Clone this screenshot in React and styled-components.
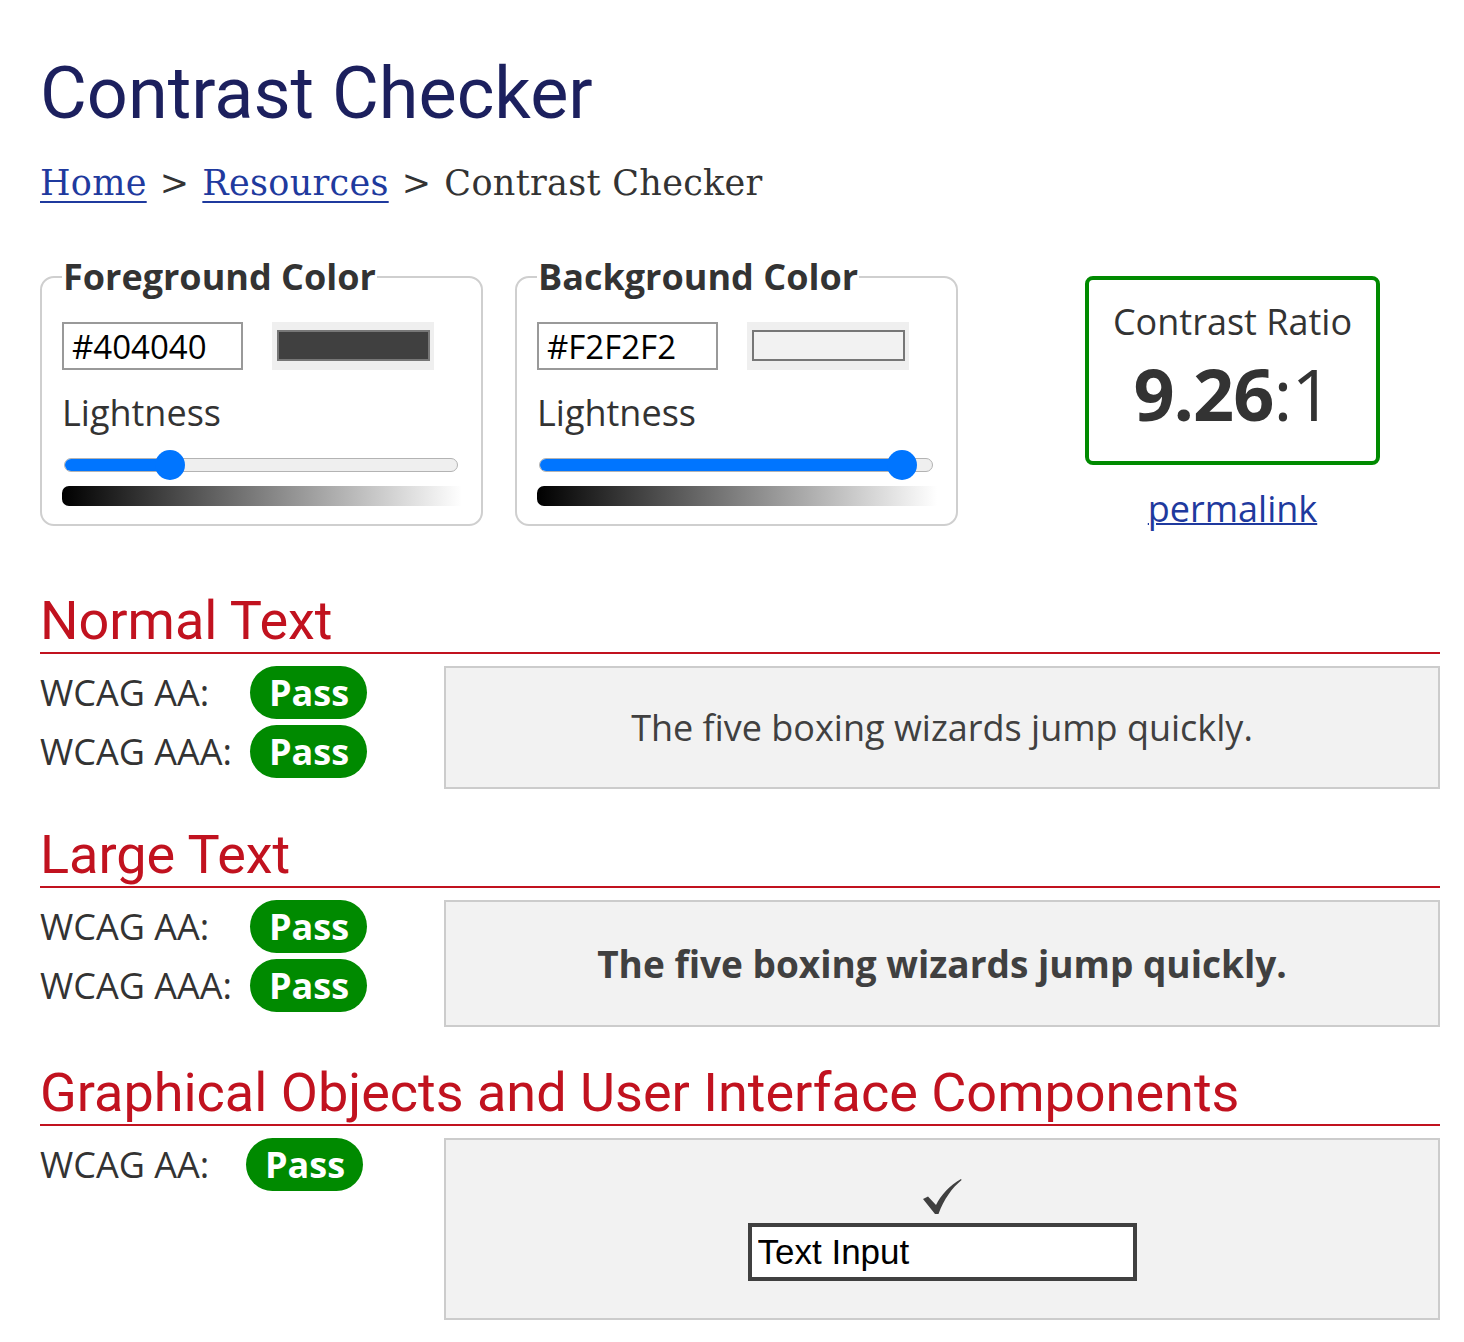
import React from "react";
import styled, { createGlobalStyle } from "styled-components";

const GlobalStyle = createGlobalStyle`
  html, body { margin: 0; padding: 0; background: #fff; }
  body { font-family: "Open Sans", "DejaVu Sans", sans-serif; color: #333; }
  * { box-sizing: border-box; }
`;

const Page = styled.main`
  width: 1464px;
  padding: 58px 24px 40px 40px;
`;

const Title = styled.h1`
  margin: 0;
  font-family: Roboto, "Open Sans", sans-serif;
  font-weight: 400;
  font-size: 72px;
  line-height: 72px;
  color: #1c205e;
`;

const Breadcrumb = styled.nav`
  margin-top: 33px;
  font-family: "DejaVu Serif", "Liberation Serif", serif;
  font-size: 35px;
  line-height: 41px;
  letter-spacing: 0.3px;
  color: #333;
  display: flex;
  gap: 13px;
`;

const Crumb = styled.a`
  color: #1f3a9e;
  text-decoration: underline;
  text-decoration-thickness: 2px;
  text-underline-offset: 6px;
`;

const TopRow = styled.div`
  margin-top: 51px;
  display: flex;
  align-items: flex-start;
`;

const ColorSet = styled.fieldset`
  margin: 0 32px 0 0;
  width: 443px;
  padding: 0 20px 18px 20px;
  border: 2px solid #cfcfcf;
  border-radius: 14px;
  min-inline-size: 0;
`;

const Legend = styled.legend`
  padding: 0 1px;
  font-size: 36px;
  line-height: 43px;
  font-weight: 700;
  color: #333;
`;

const InputRow = styled.div`
  margin-top: 24px;
  display: flex;
  align-items: center;
  gap: 29px;
`;

const HexInput = styled.input`
  width: 181px;
  height: 48px;
  border: 2px solid #999;
  padding: 0 8px;
  font-family: "Open Sans", sans-serif;
  font-size: 33px;
  color: #000;
  background: #fff;
  outline: none;
`;

const SwatchWell = styled.div`
  width: 162px;
  height: 48px;
  background: #efefef;
  padding: 8px 4px 9px 5px;
  display: flex;
`;

const Swatch = styled.div`
  flex: 1;
  border: 2px solid #777;
  background: ${(p) => p.$color};
`;

const FieldLabel = styled.div`
  margin-top: 18px;
  font-size: 36px;
  line-height: 49px;
  color: #333;
`;

const Slider = styled.div`
  position: relative;
  margin: 13px 3px 0 2px;
  height: 30px;
  display: flex;
  align-items: center;
`;

const Track = styled.div`
  position: relative;
  width: 100%;
  height: 14px;
  border: 1.5px solid #b3b3b3;
  border-radius: 7px;
  background: #efefef;
  overflow: hidden;
`;

const Fill = styled.div`
  height: 100%;
  background: #0075ff;
`;

const Thumb = styled.div`
  position: absolute;
  top: 0;
  width: 30px;
  height: 30px;
  margin-left: -15px;
  border-radius: 50%;
  background: #0075ff;
`;

const Ramp = styled.div`
  margin-top: 6px;
  height: 20px;
  width: 400px;
  border-radius: 7px 0 0 7px;
  background: linear-gradient(to right, #000 0%, #fff 100%);
`;

const RatioColumn = styled.div`
  margin-left: 95px;
  margin-top: 21px;
  width: 295px;
  display: flex;
  flex-direction: column;
  align-items: center;
`;

const RatioBox = styled.div`
  width: 100%;
  height: 189px;
  border: 4px solid #008a00;
  border-radius: 8px;
  padding-top: 17px;
  text-align: center;
  color: #333;
`;

const RatioLabel = styled.div`
  font-size: 36px;
  line-height: 49px;
`;

const RatioValue = styled.div`
  margin-top: 4px;
  font-size: 72px;
  line-height: 86px;
  letter-spacing: -1px;
  strong { font-weight: 700; }
`;

const Permalink = styled.a`
  margin-top: 19px;
  font-size: 36px;
  line-height: 49px;
  color: #1f3a9e;
  text-decoration: underline;
  text-decoration-thickness: 2px;
`;

const Section = styled.section`
  margin-top: ${(p) => p.$gap}px;
`;

const SectionTitle = styled.h2`
  margin: 0 0 12px 0;
  font-family: Roboto, "Open Sans", sans-serif;
  font-weight: 400;
  font-size: 54px;
  line-height: 62px;
  color: #c1121f;
  border-bottom: 2px solid #c1121f;
`;

const SectionBody = styled.div`
  display: flex;
  align-items: flex-start;
`;

const Results = styled.div`
  width: 404px;
  display: flex;
  flex-direction: column;
  gap: 6px;
`;

const ResultRow = styled.div`
  display: flex;
  align-items: center;
  height: 53px;
`;

const ResultLabel = styled.span`
  width: ${(p) => p.$w || 210}px;
  font-size: 36px;
  color: #333;
`;

const Badge = styled.span`
  display: inline-flex;
  align-items: center;
  height: 53px;
  padding: 0 18px 0 19px;
  border-radius: 27px;
  background: #008a00;
  color: #fff;
  font-weight: 700;
  font-size: 36px;
`;

const Sample = styled.div`
  flex: 1;
  height: ${(p) => p.$h}px;
  background: #f2f2f2;
  border: 2px solid #ccc;
  display: flex;
  flex-direction: column;
  align-items: center;
  justify-content: center;
  color: #404040;
  font-size: ${(p) => (p.$bold ? 37 : 36)}px;
  font-weight: ${(p) => (p.$bold ? 700 : 400)};
`;

const Check = styled.svg`
  width: 40px;
  height: 37px;
  margin-top: 0;
`;

const DemoInput = styled.input`
  margin-top: 8px;
  width: 389px;
  height: 58px;
  border: 4px solid #404040;
  background: #fff;
  padding: 0 6px;
  font-family: "Liberation Sans", Arial, sans-serif;
  font-size: 35px;
  color: #000;
  outline: none;
`;

function ColorField({ title, hex, lightness }) {
  const pct = lightness;
  return (
    <ColorSet>
      <Legend>{title}</Legend>
      <InputRow>
        <HexInput readOnly value={hex} />
        <SwatchWell>
          <Swatch $color={hex} />
        </SwatchWell>
      </InputRow>
      <FieldLabel>Lightness</FieldLabel>
      <Slider>
        <Track>
          <Fill style={{ width: `calc(15px + ${pct} * (100% - 30px))` }} />
        </Track>
        <Thumb style={{ left: `calc(15px + ${pct} * (100% - 30px))` }} />
      </Slider>
      <Ramp />
    </ColorSet>
  );
}

function Pass() {
  return <Badge>Pass</Badge>;
}

export default function App() {
  return (
    <Page>
      <GlobalStyle />
      <Title>Contrast Checker</Title>
      <Breadcrumb>
        <Crumb href="#">Home</Crumb>
        <span>&gt;</span>
        <Crumb href="#">Resources</Crumb>
        <span>&gt;</span>
        <span>Contrast Checker</span>
      </Breadcrumb>

      <TopRow>
        <ColorField title="Foreground Color" hex="#404040" lightness={0.251} />
        <ColorField title="Background Color" hex="#F2F2F2" lightness={0.955} />
        <RatioColumn>
          <RatioBox>
            <RatioLabel>Contrast Ratio</RatioLabel>
            <RatioValue>
              <strong>9.26</strong>:1
            </RatioValue>
          </RatioBox>
          <Permalink href="#">permalink</Permalink>
        </RatioColumn>
      </TopRow>

      <Section $gap={57}>
        <SectionTitle>Normal Text</SectionTitle>
        <SectionBody>
          <Results>
            <ResultRow>
              <ResultLabel>WCAG AA:</ResultLabel>
              <Pass />
            </ResultRow>
            <ResultRow>
              <ResultLabel>WCAG AAA:</ResultLabel>
              <Pass />
            </ResultRow>
          </Results>
          <Sample $h={123}>The five boxing wizards jump quickly.</Sample>
        </SectionBody>
      </Section>

      <Section $gap={35}>
        <SectionTitle>Large Text</SectionTitle>
        <SectionBody>
          <Results>
            <ResultRow>
              <ResultLabel>WCAG AA:</ResultLabel>
              <Pass />
            </ResultRow>
            <ResultRow>
              <ResultLabel>WCAG AAA:</ResultLabel>
              <Pass />
            </ResultRow>
          </Results>
          <Sample $h={127} $bold>
            The five boxing wizards jump quickly.
          </Sample>
        </SectionBody>
      </Section>

      <Section $gap={35}>
        <SectionTitle>Graphical Objects and User Interface Components</SectionTitle>
        <SectionBody>
          <Results>
            <ResultRow>
              <ResultLabel $w={206}>WCAG AA:</ResultLabel>
              <Pass />
            </ResultRow>
          </Results>
          <Sample $h={182}>
            <Check viewBox="0 0 40 37" aria-hidden="true">
              <path
                d="M1 21 L6 18.5 L14 27 C19 17 28 7 39 1 L39.6 2 C30 10 22 21 16.5 36 L13 36 Z"
                fill="#404040"
              />
            </Check>
            <DemoInput readOnly value="Text Input" />
          </Sample>
        </SectionBody>
      </Section>
    </Page>
  );
}
